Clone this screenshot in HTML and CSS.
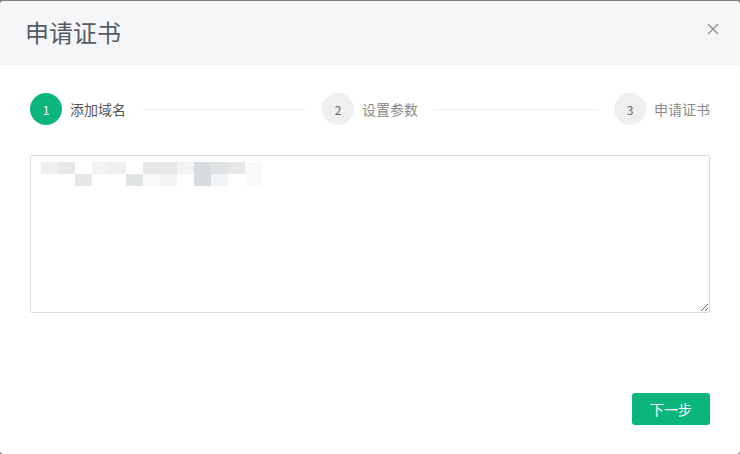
FILE: index.html
```html
<!DOCTYPE html>
<html lang="zh-CN">
<head>
  <meta charset="UTF-8">
  <title>申请证书</title>
  <link rel="stylesheet" href="styles.css">
</head>
<body>
  <div class="dialog">
    <div class="dialog-header">
      <span class="dialog-title">申请证书</span>
      <span class="close-btn">
        <svg width="12" height="12" viewBox="0 0 12 12"><path d="M1 1L11 11M11 1L1 11" stroke="#8c8c8c" stroke-width="1.3" fill="none"/></svg>
      </span>
    </div>
    <div class="dialog-body">
      <div class="steps">
        <span class="step-num active">1</span>
        <span class="step-label active">添加域名</span>
        <span class="step-line"></span>
        <span class="step-num">2</span>
        <span class="step-label">设置参数</span>
        <span class="step-line"></span>
        <span class="step-num">3</span>
        <span class="step-label">申请证书</span>
      </div>

      <div class="domain-box">
        <textarea class="domain-input"></textarea>
        <!-- blurred domain list -->
        <div class="mosaic">
          <i class="m2"></i><i class="m3"></i><i></i><i class="m1"></i><i class="m2"></i><i></i><i class="m3"></i><i class="m3"></i><i class="m1"></i><i class="m5"></i><i class="m4"></i><i class="m3"></i><i class="m0"></i>
          <i></i><i></i><i class="m3"></i><i></i><i></i><i class="m4"></i><i class="m0"></i><i class="m1"></i><i></i><i class="m5"></i><i class="m1"></i><i></i><i class="m0"></i>
        </div>
      </div>

      <div class="dialog-footer">
        <button class="next-btn">下一步</button>
      </div>
    </div>
  </div>
</body>
</html>
```

FILE: styles.css
```css
html, body { margin: 0; padding: 0; }
body { background: #808080; font-family: "Microsoft YaHei", "Noto Sans CJK SC", "Noto Sans", sans-serif; padding-top: 1px; }
.dialog { background: #fff; height: 453px; border-radius: 4px; overflow: hidden; }
.dialog-header { height: 64px; background: #f5f6f8; display: flex; align-items: center; justify-content: space-between; padding: 0 21px 0 25px; }
.dialog-title { font-size: 24px; color: #555b61; margin-top: -3px; }
.close-btn { display: flex; margin-top: -9px; }
.dialog-body { padding: 28px 30px 0; }
.steps { display: flex; align-items: center; height: 32px; }
.step-num { width: 32px; height: 32px; border-radius: 50%; background: #efefef; color: #666; font-size: 12px; display: flex; align-items: center; justify-content: center; flex: none; }
.step-num.active { background: #0bb67d; color: #fff; }
.step-label { font-size: 14px; color: #8a8a8a; margin-left: 8px; flex: none; }
.step-label.active { color: #555; }
.step-line { flex: 1; height: 1px; background: #ececec; margin: 0 16px; }
.domain-box { position: relative; margin-top: 30px; }
.domain-input { display: block; width: 100%; height: 158px; box-sizing: border-box; border: 1px solid #dcdcdc; border-radius: 2px; resize: vertical; outline: none; padding: 6px 10px; font-family: inherit; }
.mosaic { position: absolute; left: 11px; top: 7px; display: grid; grid-template-columns: repeat(13, 17px); grid-auto-rows: 12px; pointer-events: none; }
.mosaic .m0 { background: #fafafa; }
.mosaic .m1 { background: #f2f3f4; }
.mosaic .m2 { background: #eeeff0; }
.mosaic .m3 { background: #e6e7e9; }
.mosaic .m4 { background: #e0e3e4; }
.mosaic .m5 { background: #d9dcdf; }
.dialog-footer { display: flex; justify-content: flex-end; margin-top: 80px; }
.next-btn { width: 78px; height: 32px; border: none; border-radius: 3px; background: #0bb67d; color: #fff; font-size: 14px; font-family: inherit; cursor: pointer; }
.next-btn:hover { background: #0aa570; }
```
